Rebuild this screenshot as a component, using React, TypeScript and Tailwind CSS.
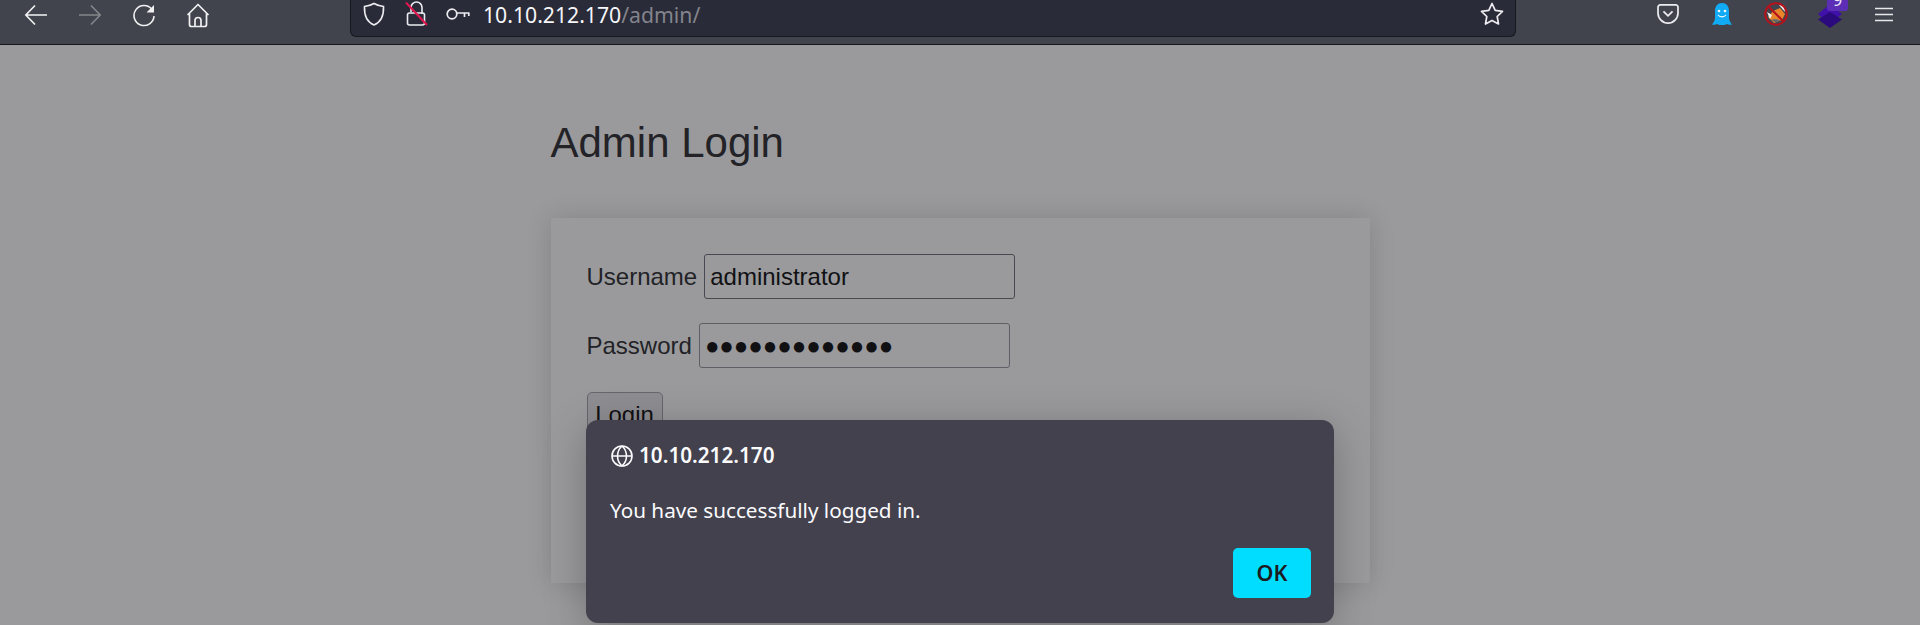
import React from "react";

const NavButton = ({ children }: { children: React.ReactNode }) => (
  <div className="w-[54px] h-[30px] flex items-center justify-center">{children}</div>
);

const App: React.FC = () => {
  return (
    <div className="relative w-[1920px] h-[625px] overflow-hidden bg-[#9a9a9c] font-['Liberation_Sans',sans-serif]">
      {/* browser toolbar */}
      <div className="h-[45px] bg-[#42444d] border-b border-[#16161a] flex items-start pl-[9px]">
        <NavButton>
          <svg width="24" height="24" viewBox="0 0 24 24" fill="none" stroke="#f4f4f6" strokeWidth="1.6">
            <path d="M23 12H2M11 2.5 1.800 12l9.200 9.500" />
          </svg>
        </NavButton>
        <NavButton>
          <svg width="24" height="24" viewBox="0 0 24 24" fill="none" stroke="#85868c" strokeWidth="1.6">
            <path d="M1 12h21M13 2.500l9.200 9.500-9.200 9.500" />
          </svg>
        </NavButton>
        <NavButton>
          <svg width="24" height="24" viewBox="0 0 24 24" fill="none" stroke="#f0f0f2" strokeWidth="1.6">
            <path d="M20 6.500A10 10 0 1 0 22 13" />
            <path d="M22 2v7.500h-7.500z" fill="#f0f0f2" stroke="none" />
          </svg>
        </NavButton>
        <NavButton>
          <svg width="24" height="26" viewBox="0 0 24 26" fill="none" stroke="#f0f0f2" strokeWidth="1.7" strokeLinejoin="round">
            <path d="M1.500 13 12 2.500 22.500 13M3.500 11v11.500a2 2 0 0 0 2 2h13a2 2 0 0 0 2-2V11" />
            <path d="M9 24.500v-6a3 3 0 0 1 6 0v6" />
          </svg>
        </NavButton>

        {/* url bar */}
        <div className="ml-[125px] w-[1166px] h-[37px] pb-[8px] bg-[#2a2b38] border border-[#17171c] border-t-0 rounded-b-[6px] flex items-center">
          <svg className="ml-[12px]" width="22" height="25" viewBox="0 0 22 25" fill="none" stroke="#ececf0" strokeWidth="1.6">
            <path d="M11 1.500c3 1.800 6 2.600 9.500 3 .4 8.500-2.500 15.500-9.500 18.500C4 20 1.100 13 1.500 4.500c3.500-.4 6.500-1.200 9.500-3z" />
          </svg>
          <svg className="ml-[20px]" width="24" height="26" viewBox="0 0 24 26" fill="none">
            <path d="M6 11V6.500a5.500 5.500 0 0 1 11 0V13" stroke="#ececf0" strokeWidth="1.6" />
            <rect x="2.500" y="12" width="17" height="12" rx="2" stroke="#ececf0" strokeWidth="1.6" />
            <path d="M1 1.500 22 24" stroke="#e1174f" strokeWidth="2" />
          </svg>
          <svg className="ml-[17px]" width="24" height="14" viewBox="0 0 24 14" fill="none" stroke="#ececf0" strokeWidth="1.700">
            <circle cx="6" cy="7" r="4.800" />
            <path d="M11 6h12.500M18.500 6v4M22.800 6v3" />
          </svg>
          <div className="ml-[13px] text-[21.200px] leading-[29px] font-['Noto_Sans',sans-serif] text-[#f6f6f8] whitespace-nowrap">
            10.10.212.170<span className="text-[#83848c]">/admin/</span>
          </div>
          <svg className="ml-auto mr-[11px]" width="24" height="24" viewBox="0 0 24 24" fill="none" stroke="#ececf0" strokeWidth="1.700" strokeLinejoin="round">
            <path d="m12 1.500 3.200 6.800 7.300 1-5.300 5.200 1.300 7.500-6.500-3.600L5.500 22l1.300-7.500L1.500 9.300l7.300-1z" />
          </svg>
        </div>

        {/* extensions */}
        <div className="ml-[125px] flex items-center h-[28px]">
          <div className="w-[54px] flex justify-center">
            <svg width="22" height="20" viewBox="0 0 24 22" fill="none" stroke="#ececf0" strokeWidth="1.900">
              <path d="M3.500 1h17A2.500 2.500 0 0 1 23 3.500V10a11 11 0 0 1-22 0V3.500A2.500 2.500 0 0 1 3.500 1z" />
              <path d="m7 8 5 5 5-5" strokeWidth="2" />
            </svg>
          </div>
          <div className="w-[54px] flex justify-center">
            <svg width="20" height="22" viewBox="0 0 20 22">
              <path d="M10 0c4.500 0 7 3.500 7 8v7c0 2 1 4 3 6.500-2.500.5-4 .2-5-.5-1.500 1-3 1-5 1s-3.500 0-5-1c-1 .7-2.500 1-5 .5 2-2.500 3-4.500 3-6.500V8c0-4.500 2.500-8 7-8z" fill="#10aaf5" />
              <circle cx="7" cy="8" r="1.300" fill="#fff" />
              <circle cx="13" cy="8" r="1.300" fill="#fff" />
              <path d="M6 12c2 2.500 6 2.500 8 0" stroke="#fff" strokeWidth="1.200" fill="none" />
            </svg>
          </div>
          <div className="w-[54px] flex justify-center">
            <svg width="24" height="24" viewBox="0 0 24 24">
              <path d="M4 15 9 9l7-3 5 6-3 6-8 3z" fill="#e8842a" />
              <path d="M15 3 20 3l1 7zM3 10l5 3-2 4z" fill="#f2f2f2" />
              <path d="M7 18c3-1 6-1 9 .5l-4 2z" fill="#5d6a70" />
              <circle cx="12" cy="12" r="10.800" fill="none" stroke="#b5121c" strokeWidth="2" />
              <path d="m4.500 4.500 15 15" stroke="#b5121c" strokeWidth="2" />
            </svg>
          </div>
          <div className="w-[54px] flex justify-center relative">
            <svg width="24" height="24" viewBox="0 0 24 24" className="mt-[4px]">
              <path d="M12 0 24 10 12 20 0 10z" fill="#4011a8" />
              <path d="M12 8 24 15.500 12 24 0 15.500z" fill="#2a0a7c" />
            </svg>
            <div className="absolute left-[24px] top-[-14px] w-[21px] h-[25px] rounded-[3px] bg-[#5b2eb5] text-[#ece6fa] text-[16px] leading-[28px] text-center font-['Noto_Sans',sans-serif]">
              9
            </div>
          </div>
          <div className="w-[54px] flex justify-center">
            <svg width="18" height="15" viewBox="0 0 18 15" stroke="#e8e8ec" strokeWidth="1.700">
              <path d="M0 1.500h18M0 7.500h18M0 13.500h18" />
            </svg>
          </div>
        </div>
      </div>

      {/* page */}
      <div className="w-[819px] mx-auto text-[#222227]">
        <h1 className="pt-[74px] h-[173px] text-[42px] leading-[48px] font-normal">Admin Login</h1>
        <div className="h-[365px] bg-[#9a9a9c] shadow-[0_0_24px_rgba(0,0,0,0.14)] p-[36px] text-[24px]">
          <div className="flex items-center gap-[7px]">
            <label>Username</label>
            <input
              readOnly
              value="administrator"
              className="w-[311px] h-[45px] px-[5px] border border-[#494952] rounded-[3px] text-[#111114] bg-transparent outline-none"
            />
          </div>
          <div className="flex items-center gap-[7px] mt-[24px]">
            <label>Password</label>
            <input
              readOnly
              value="●●●●●●●●●●●●●"
              className="w-[311px] h-[45px] px-[5px] border border-[#5e5e66] rounded-[3px] text-[#111114] bg-transparent outline-none"
            />
          </div>
          <button className="mt-[24px] w-[76px] h-[46px] border border-[#66666c] rounded-[5px] bg-[#8e8e92] text-[#111114]">
            Login
          </button>
        </div>
      </div>

      {/* alert dialog */}
      <div className="absolute left-[586px] top-[420px] w-[748px] h-[203px] rounded-[12px] bg-[#42414d] shadow-[0_8px_40px_rgba(0,0,0,0.25)] pt-[24px] pl-[24px] pr-[23px] pb-[25px] flex flex-col font-['Noto_Sans',sans-serif] text-[#fbfbfe]">
        <div className="flex items-center gap-[5px] h-[24px] text-[20.700px] font-semibold">
          <svg width="24" height="24" viewBox="0 0 24 24" fill="none" stroke="#fbfbfe" strokeWidth="1.600">
            <circle cx="12" cy="12" r="10" />
            <path d="M2 12h20M12 2c-6 5.500-6 14.500 0 20M12 2c6 5.500 6 14.500 0 20" />
          </svg>
          10.10.212.170
        </div>
        <div className="mt-[30px] text-[20.700px] leading-[24px]">You have successfully logged in.</div>
        <button className="mt-auto ml-auto w-[78px] h-[50px] rounded-[5px] bg-[#00ddff] text-[#1c1b22] text-[21.500px] font-semibold">
          OK
        </button>
      </div>
    </div>
  );
};

export default App;
